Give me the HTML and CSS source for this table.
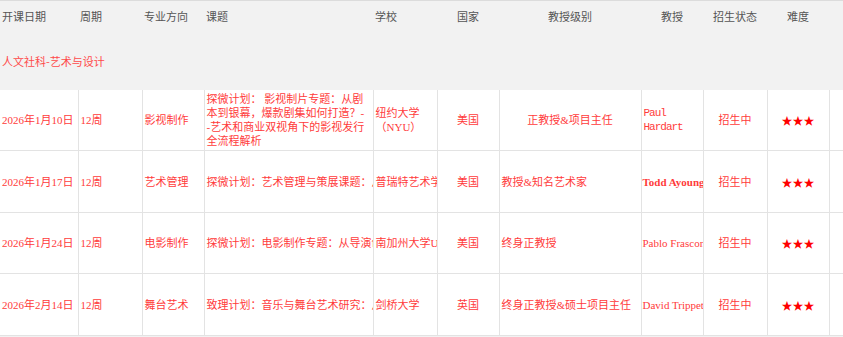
FILE: index.html
```html
<!DOCTYPE html>
<html lang="zh-CN">
<head>
<meta charset="utf-8">
<title>课程列表</title>
<link rel="stylesheet" href="styles.css">
</head>
<body>
<table class="sheet">
  <colgroup>
    <col class="c-date"><col class="c-week"><col class="c-major"><col class="c-topic"><col class="c-school">
    <col class="c-country"><col class="c-level"><col class="c-prof"><col class="c-status"><col class="c-diff"><col class="c-rest">
  </colgroup>
  <thead>
    <tr class="head-row">
      <th>开课日期</th><th>周期</th><th>专业方向</th><th>课题</th><th>学校</th>
      <th class="center">国家</th><th class="center">教授级别</th><th class="center">教授</th><th class="center">招生状态</th><th class="center">难度</th><th></th>
    </tr>
    <tr class="section-row">
      <th colspan="11">人文社科-艺术与设计</th>
    </tr>
  </thead>
  <tbody>
    <tr class="row row-odd">
      <td>2026年1月10日</td>
      <td>12周</td>
      <td>影视制作</td>
      <td class="topic wrap">探微计划： 影视制片专题：从剧本到银幕，爆款剧集如何打造？-<wbr>-艺术和商业双视角下的影视发行全流程解析</td>
      <td class="wrap">纽约大学（NYU）</td>
      <td class="center">美国</td>
      <td class="center">正教授&amp;项目主任</td>
      <td class="wrap mono">Paul Hardart</td>
      <td class="center">招生中</td>
      <td class="center stars">★★★</td>
      <td></td>
    </tr>
    <tr class="row row-even">
      <td>2026年1月17日</td>
      <td>12周</td>
      <td>艺术管理</td>
      <td class="topic">探微计划：艺术管理与策展课题：从策展理念到展览实践</td>
      <td>普瑞特艺术学院</td>
      <td class="center">美国</td>
      <td>教授&amp;知名艺术家</td>
      <td class="name bold">Todd Ayoung</td>
      <td class="center">招生中</td>
      <td class="center stars">★★★</td>
      <td></td>
    </tr>
    <tr class="row row-odd">
      <td>2026年1月24日</td>
      <td>12周</td>
      <td>电影制作</td>
      <td class="topic">探微计划：电影制作专题：从导演创作到影片制作全流程</td>
      <td>南加州大学USC</td>
      <td class="center">美国</td>
      <td>终身正教授</td>
      <td class="name">Pablo Frascone</td>
      <td class="center">招生中</td>
      <td class="center stars">★★★</td>
      <td></td>
    </tr>
    <tr class="row row-even">
      <td>2026年2月14日</td>
      <td>12周</td>
      <td>舞台艺术</td>
      <td class="topic">致理计划：音乐与舞台艺术研究：从经典作品到当代演绎</td>
      <td>剑桥大学</td>
      <td class="center">英国</td>
      <td>终身正教授&amp;硕士项目主任</td>
      <td class="name">David Trippett</td>
      <td class="center">招生中</td>
      <td class="center stars">★★★</td>
      <td></td>
    </tr>
  </tbody>
</table>
</body>
</html>
```

FILE: styles.css
```css
html, body {
  margin: 0;
  padding: 0;
  background: #f2f2f2;
  overflow: hidden;
}

.sheet {
  width: 843px;
  table-layout: fixed;
  border-collapse: collapse;
  font-family: "Liberation Serif", "Noto Sans CJK SC", serif;
  font-size: 11px;
  line-height: 14px;
  color: #ff3b3b;
}

.c-date { width: 78px; }
.c-week { width: 64px; }
.c-major { width: 62px; }
.c-topic { width: 169px; }
.c-school { width: 64px; }
.c-country { width: 62px; }
.c-level { width: 142px; }
.c-prof { width: 62px; }
.c-status { width: 64px; }
.c-diff { width: 62px; }
.c-rest { width: 14px; }

.head-row th {
  height: 30px;
  padding: 0 0 0 2px;
  background: #f2f2f2;
  border-top: 1px solid #dcdcdc;
  font-family: "Noto Sans CJK SC", sans-serif;
  font-weight: normal;
  color: #555555;
  text-align: left;
  vertical-align: middle;
  white-space: nowrap;
}

.head-row th.center {
  text-align: center;
  padding: 0;
}

.section-row th {
  height: 59px;
  padding: 0 0 0 2px;
  background: #f2f2f2;
  font-family: "Noto Sans CJK SC", sans-serif;
  font-weight: normal;
  color: #ff4a4a;
  text-align: left;
  vertical-align: middle;
}

.row td {
  background: #ffffff;
  border-right: 1px solid #e3e3e3;
  border-bottom: 1px solid #e3e3e3;
  padding: 0 0 0 2px;
  vertical-align: middle;
  white-space: nowrap;
  overflow: hidden;
}

.row-odd td { height: 60px; }
.row-even td { height: 61px; }

.row td.wrap {
  white-space: normal;
}

.row td.topic {
  padding-right: 7px;
}

.row td.center {
  text-align: center;
  padding: 0;
}

.row td.stars {
  font-family: "Noto Sans CJK SC", sans-serif;
  color: #ff0000;
  font-size: 11px;
}

.row td.mono {
  font-family: "Liberation Mono", monospace;
  letter-spacing: -1px;
}

.row td.name {
  padding-left: 1px;
}

.row td.bold {
  font-weight: bold;
}
```
